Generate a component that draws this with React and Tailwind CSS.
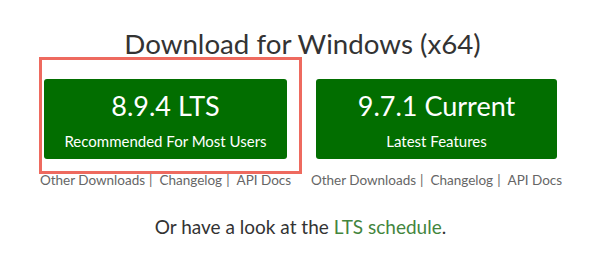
import React from "react";

const releases = [
  { version: "8.9.4 LTS", note: "Recommended For Most Users", highlighted: true, width: "w-[243px]" },
  { version: "9.7.1 Current", note: "Latest Features", highlighted: false, width: "w-[241px]" },
];

function DownloadLinks() {
  return (
    <div className="flex justify-center mt-[12px] whitespace-nowrap text-[13.5px] leading-[18px] text-[#666]">
      <a href="#" className="text-[#666]">Other Downloads</a>
      <span className="ml-[4px] mr-[7px]">|</span>
      <a href="#" className="text-[#666]">Changelog</a>
      <span className="ml-[4px] mr-[7px]">|</span>
      <a href="#" className="text-[#666]">API Docs</a>
    </div>
  );
}

function ReleaseButton({ version, note, highlighted, width }) {
  return (
    <div className={`relative ${width}`}>
      {highlighted && (
        <div className="absolute left-[-5px] top-[-22px] w-[263px] h-[117px] border-[3px] border-[#ee6a5f] pointer-events-none" />
      )}
      <a
        href="#"
        className="flex flex-col items-center h-[80px] pt-[11px] rounded-[3px] bg-[#026e00] text-white"
      >
        <span className="text-[27px] leading-[32px]">{version}</span>
        <span className="mt-[9px] text-[15px] leading-[20px]">{note}</span>
      </a>
      <DownloadLinks />
    </div>
  );
}

export default function App() {
  return (
    <div className="w-[601px] h-[269px] bg-white flex flex-col items-center font-['Lato',sans-serif] overflow-hidden">
      <h2 className="mt-[27px] text-[27.7px] leading-[34px] text-[#333] ml-[4px]">
        Download for Windows (x64)
      </h2>
      <div className="flex gap-[29px] mt-[18px]">
        {releases.map((r) => (
          <ReleaseButton key={r.version} {...r} />
        ))}
      </div>
      <p className="mt-[26px] text-[19px] leading-[24px] text-[#333]">
        Or have a look at the{" "}
        <a href="#" className="text-[#43853d]">LTS schedule</a>.
      </p>
    </div>
  );
}
